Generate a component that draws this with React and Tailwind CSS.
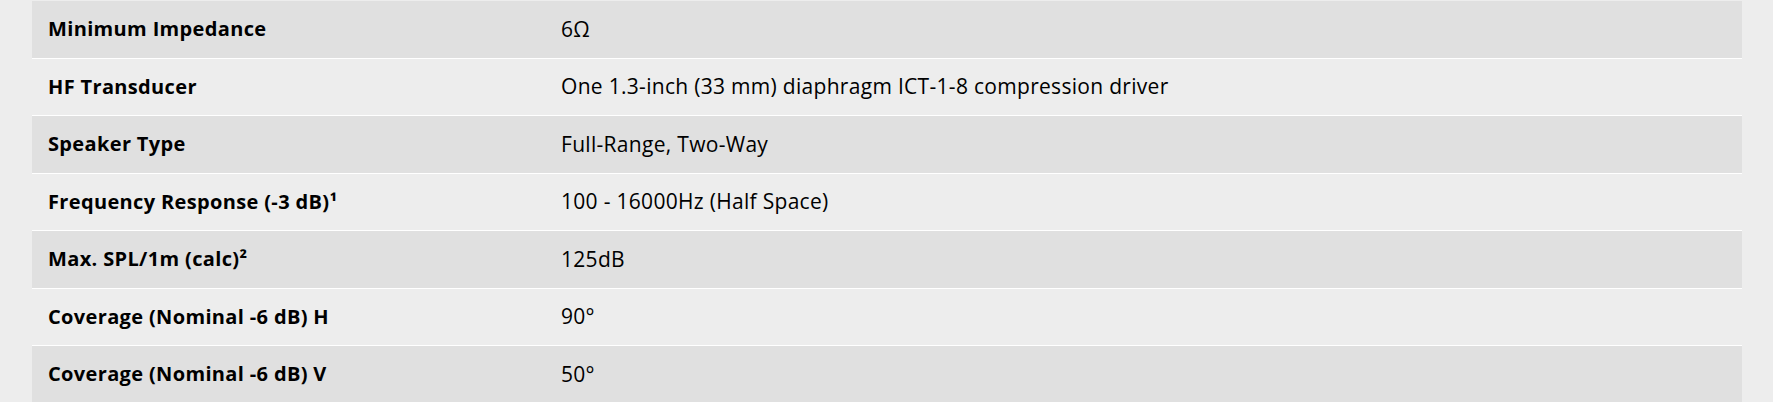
const rows = [
  ['Minimum Impedance', '6Ω'],
  ['HF Transducer', 'One 1.3-inch (33 mm) diaphragm ICT-1-8 compression driver'],
  ['Speaker Type', 'Full-Range, Two-Way'],
  ['Frequency Response (-3 dB)¹', '100 - 16000Hz (Half Space)'],
  ['Max. SPL/1m (calc)²', '125dB'],
  ['Coverage (Nominal -6 dB) H', '90°'],
  ['Coverage (Nominal -6 dB) V', '50°'],
];

export default function App() {
  return (
    <div className="min-h-[402px] bg-[#ededed] pt-px px-8 font-['Open_Sans',sans-serif] text-black">
      <div className="w-[1710px]">
        {rows.map(([label, value], i) => (
          <div
            key={label}
            className={`flex h-[57.5px] items-center border-b border-white ${
              i % 2 === 0 ? 'bg-[#e0e0e0]' : 'bg-[#ededed]'
            }`}
          >
            <div className="w-[30%] shrink-0 px-4 text-[20px] font-bold tracking-[0.35px]">{label}</div>
            <div className="flex-1 px-4 text-[21px] tracking-[0.3px]">{value}</div>
          </div>
        ))}
      </div>
    </div>
  );
}
